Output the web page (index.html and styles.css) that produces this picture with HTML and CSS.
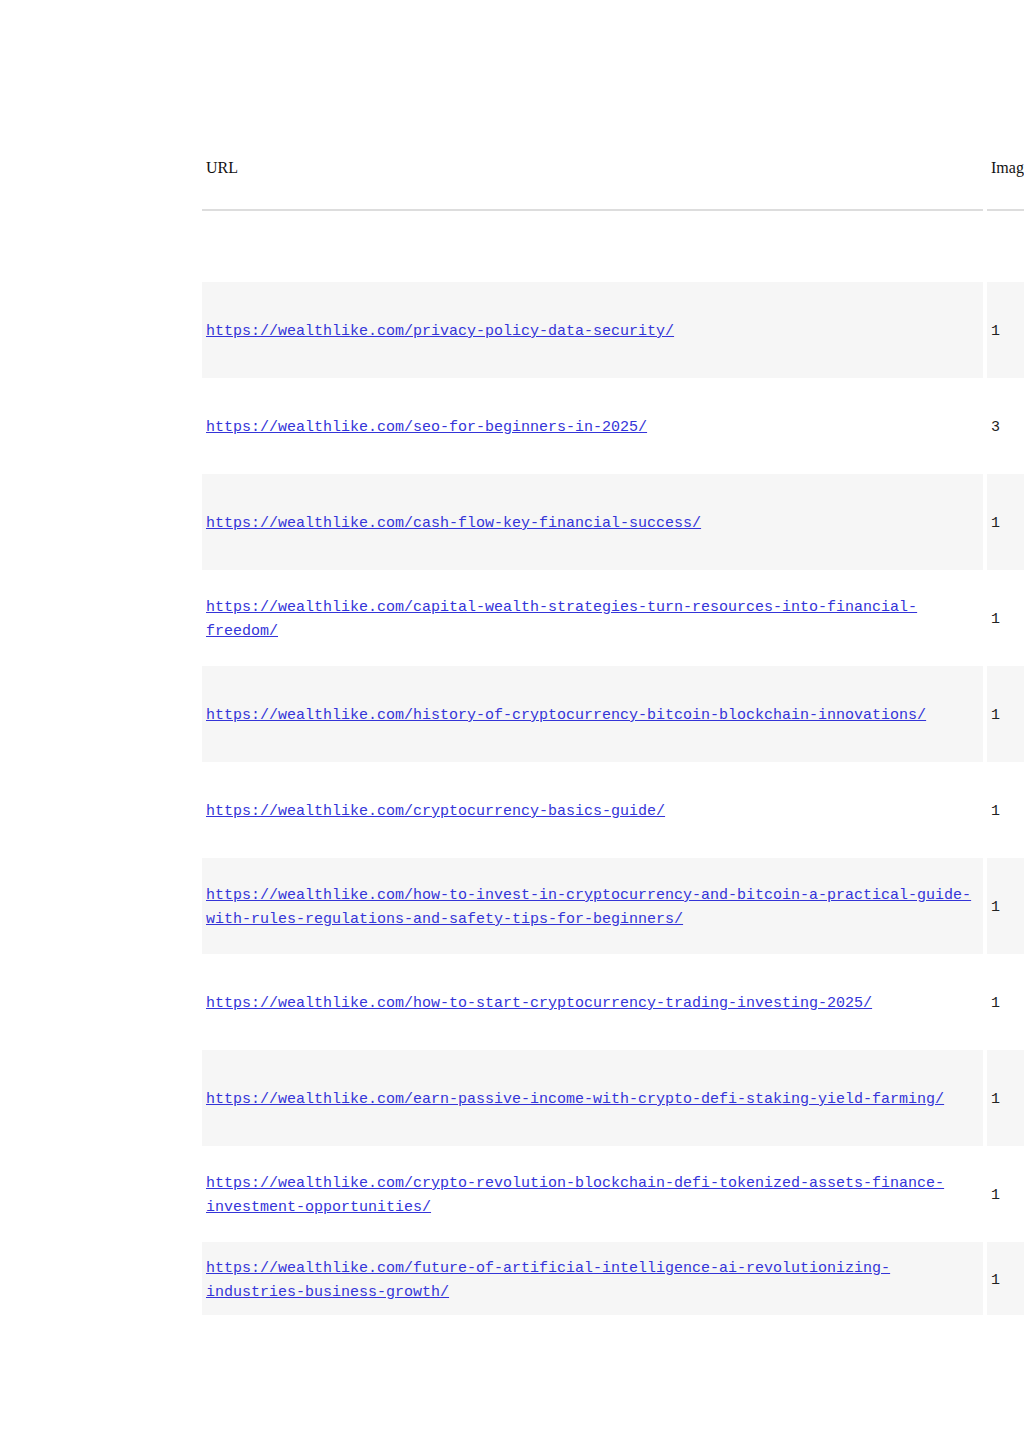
FILE: index.html
```html
<!DOCTYPE html>
<html lang="en">
<head>
    <meta charset="UTF-8">
    <meta name="viewport" content="width=device-width, initial-scale=1.0">
    <title>XML Sitemap</title>
    <link rel="stylesheet" href="styles.css">
</head>
<body>
    <main class="content">
        <table class="sitemap">
            <thead>
                <tr>
                    <th class="col-url">URL</th>
                    <th class="col-img">Images</th>
                    <th class="col-mod">Last Mod.</th>
                </tr>
            </thead>
            <tbody>
                <tr class="gap"><td colspan="3"></td></tr>
                <tr class="odd">
                    <td><a href="https://wealthlike.com/privacy-policy-data-security/">https://wealthlike.com/privacy-policy-data-security/</a></td>
                    <td>1</td>
                    <td></td>
                </tr>
                <tr>
                    <td><a href="https://wealthlike.com/seo-for-beginners-in-2025/">https://wealthlike.com/seo-for-beginners-in-2025/</a></td>
                    <td>3</td>
                    <td></td>
                </tr>
                <tr class="odd">
                    <td><a href="https://wealthlike.com/cash-flow-key-financial-success/">https://wealthlike.com/cash-flow-key-financial-success/</a></td>
                    <td>1</td>
                    <td></td>
                </tr>
                <tr>
                    <td><a href="https://wealthlike.com/capital-wealth-strategies-turn-resources-into-financial-freedom/">https://wealthlike.com/capital-wealth-strategies-turn-resources-into-financial-freedom/</a></td>
                    <td>1</td>
                    <td></td>
                </tr>
                <tr class="odd">
                    <td><a href="https://wealthlike.com/history-of-cryptocurrency-bitcoin-blockchain-innovations/">https://wealthlike.com/history-of-cryptocurrency-bitcoin-blockchain-innovations/</a></td>
                    <td>1</td>
                    <td></td>
                </tr>
                <tr>
                    <td><a href="https://wealthlike.com/cryptocurrency-basics-guide/">https://wealthlike.com/cryptocurrency-basics-guide/</a></td>
                    <td>1</td>
                    <td></td>
                </tr>
                <tr class="odd">
                    <td><a href="https://wealthlike.com/how-to-invest-in-cryptocurrency-and-bitcoin-a-practical-guide-with-rules-regulations-and-safety-tips-for-beginners/">https://wealthlike.com/how-to-invest-in-cryptocurrency-and-bitcoin-a-practical-guide-with-rules-regulations-and-safety-tips-for-beginners/</a></td>
                    <td>1</td>
                    <td></td>
                </tr>
                <tr>
                    <td><a href="https://wealthlike.com/how-to-start-cryptocurrency-trading-investing-2025/">https://wealthlike.com/how-to-start-cryptocurrency-trading-investing-2025/</a></td>
                    <td>1</td>
                    <td></td>
                </tr>
                <tr class="odd">
                    <td><a href="https://wealthlike.com/earn-passive-income-with-crypto-defi-staking-yield-farming/">https://wealthlike.com/earn-passive-income-with-crypto-defi-staking-yield-farming/</a></td>
                    <td>1</td>
                    <td></td>
                </tr>
                <tr>
                    <td><a href="https://wealthlike.com/crypto-revolution-blockchain-defi-tokenized-assets-finance-investment-opportunities/">https://wealthlike.com/crypto-revolution-blockchain-defi-tokenized-assets-finance-investment-opportunities/</a></td>
                    <td>1</td>
                    <td></td>
                </tr>
                <tr class="odd last">
                    <td><a href="https://wealthlike.com/future-of-artificial-intelligence-ai-revolutionizing-industries-business-growth/">https://wealthlike.com/future-of-artificial-intelligence-ai-revolutionizing-industries-business-growth/</a></td>
                    <td>1</td>
                    <td></td>
                </tr>
            </tbody>
        </table>
    </main>
</body>
</html>
```

FILE: styles.css
```css
/* page */
html, body {
    margin: 0;
    padding: 0;
    background-color: #fff;
    overflow-x: hidden;
}
.content {
    padding: 115px 0 0 198px;
}
/* sitemap table */
.sitemap {
    border-collapse: separate;
    border-spacing: 4px 0;
    table-layout: fixed;
    width: 1133px;
    font-family: "Liberation Mono", monospace;
    font-size: 15px;
    line-height: 24px;
    color: #222;
}
.sitemap .col-url { width: 773px; }
.sitemap .col-img { width: 160px; }
.sitemap .col-mod { width: 160px; }
.sitemap th {
    height: 72px;
    padding: 12px 4px 0;
    text-align: left;
    vertical-align: middle;
    font-family: "Liberation Serif", serif;
    font-size: 16px;
    font-weight: normal;
    color: #111;
    border-bottom: 2px solid #ddd;
}
.sitemap td {
    padding: 4px 4px 0;
    vertical-align: middle;
}
.sitemap tr {
    height: 96px;
}
.sitemap tr.gap {
    height: 71px;
}
.sitemap tr.gap td {
    padding: 0;
}
.sitemap tr.odd td {
    background-color: #f6f6f6;
}
.sitemap tr.last {
    height: 73px;
}
.sitemap a {
    color: #3434d8;
    text-decoration: underline;
}
```
